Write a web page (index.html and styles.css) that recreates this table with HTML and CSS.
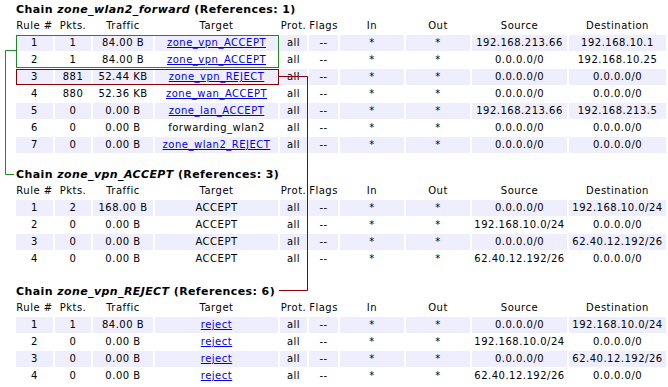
FILE: index.html
```html
<!DOCTYPE html>
<html>
<head>
<meta charset="utf-8">
<link rel="stylesheet" href="styles.css">
</head>
<body>
<div class="page">
  <section class="chain chain-first">
    <h3 class="chain-title">Chain <em>zone_wlan2_forward</em> (References: 1)</h3>
    <table class="rules">
      <colgroup><col class="c-rule"><col class="c-pkts"><col class="c-traffic"><col class="c-target"><col class="c-prot"><col class="c-flags"><col class="c-in"><col class="c-out"><col class="c-src"><col class="c-dst"></colgroup>
      <thead><tr><th>Rule #</th><th>Pkts.</th><th>Traffic</th><th>Target</th><th>Prot.</th><th>Flags</th><th>In</th><th>Out</th><th>Source</th><th>Destination</th></tr></thead>
      <tbody>
        <tr class="alt"><td>1</td><td>1</td><td>84.00 B</td><td><a href="#">zone_vpn_ACCEPT</a></td><td>all</td><td>--</td><td>*</td><td>*</td><td>192.168.213.66</td><td>192.168.10.1</td></tr>
        <tr><td>2</td><td>1</td><td>84.00 B</td><td><a href="#">zone_vpn_ACCEPT</a></td><td>all</td><td>--</td><td>*</td><td>*</td><td>0.0.0.0/0</td><td>192.168.10.25</td></tr>
        <tr class="alt"><td>3</td><td>881</td><td>52.44 KB</td><td><a href="#">zone_vpn_REJECT</a></td><td>all</td><td>--</td><td>*</td><td>*</td><td>0.0.0.0/0</td><td>0.0.0.0/0</td></tr>
        <tr><td>4</td><td>880</td><td>52.36 KB</td><td><a href="#">zone_wan_ACCEPT</a></td><td>all</td><td>--</td><td>*</td><td>*</td><td>0.0.0.0/0</td><td>0.0.0.0/0</td></tr>
        <tr class="alt"><td>5</td><td>0</td><td>0.00 B</td><td><a href="#">zone_lan_ACCEPT</a></td><td>all</td><td>--</td><td>*</td><td>*</td><td>192.168.213.66</td><td>192.168.213.5</td></tr>
        <tr><td>6</td><td>0</td><td>0.00 B</td><td>forwarding_wlan2</td><td>all</td><td>--</td><td>*</td><td>*</td><td>0.0.0.0/0</td><td>0.0.0.0/0</td></tr>
        <tr class="alt"><td>7</td><td>0</td><td>0.00 B</td><td><a href="#">zone_wlan2_REJECT</a></td><td>all</td><td>--</td><td>*</td><td>*</td><td>0.0.0.0/0</td><td>0.0.0.0/0</td></tr>
      </tbody>
    </table>
  </section>

  <section class="chain chain-second">
    <h3 class="chain-title">Chain <em>zone_vpn_ACCEPT</em> (References: 3)</h3>
    <table class="rules">
      <colgroup><col class="c-rule"><col class="c-pkts"><col class="c-traffic"><col class="c-target"><col class="c-prot"><col class="c-flags"><col class="c-in"><col class="c-out"><col class="c-src"><col class="c-dst"></colgroup>
      <thead><tr><th>Rule #</th><th>Pkts.</th><th>Traffic</th><th>Target</th><th>Prot.</th><th>Flags</th><th>In</th><th>Out</th><th>Source</th><th>Destination</th></tr></thead>
      <tbody>
        <tr class="alt"><td>1</td><td>2</td><td>168.00 B</td><td>ACCEPT</td><td>all</td><td>--</td><td>*</td><td>*</td><td>0.0.0.0/0</td><td>192.168.10.0/24</td></tr>
        <tr><td>2</td><td>0</td><td>0.00 B</td><td>ACCEPT</td><td>all</td><td>--</td><td>*</td><td>*</td><td>192.168.10.0/24</td><td>0.0.0.0/0</td></tr>
        <tr class="alt"><td>3</td><td>0</td><td>0.00 B</td><td>ACCEPT</td><td>all</td><td>--</td><td>*</td><td>*</td><td>0.0.0.0/0</td><td>62.40.12.192/26</td></tr>
        <tr><td>4</td><td>0</td><td>0.00 B</td><td>ACCEPT</td><td>all</td><td>--</td><td>*</td><td>*</td><td>62.40.12.192/26</td><td>0.0.0.0/0</td></tr>
      </tbody>
    </table>
  </section>

  <section class="chain chain-third">
    <h3 class="chain-title">Chain <em>zone_vpn_REJECT</em> (References: 6)</h3>
    <table class="rules">
      <colgroup><col class="c-rule"><col class="c-pkts"><col class="c-traffic"><col class="c-target"><col class="c-prot"><col class="c-flags"><col class="c-in"><col class="c-out"><col class="c-src"><col class="c-dst"></colgroup>
      <thead><tr><th>Rule #</th><th>Pkts.</th><th>Traffic</th><th>Target</th><th>Prot.</th><th>Flags</th><th>In</th><th>Out</th><th>Source</th><th>Destination</th></tr></thead>
      <tbody>
        <tr class="alt"><td>1</td><td>1</td><td>84.00 B</td><td><a href="#">reject</a></td><td>all</td><td>--</td><td>*</td><td>*</td><td>0.0.0.0/0</td><td>192.168.10.0/24</td></tr>
        <tr><td>2</td><td>0</td><td>0.00 B</td><td><a href="#">reject</a></td><td>all</td><td>--</td><td>*</td><td>*</td><td>192.168.10.0/24</td><td>0.0.0.0/0</td></tr>
        <tr class="alt"><td>3</td><td>0</td><td>0.00 B</td><td><a href="#">reject</a></td><td>all</td><td>--</td><td>*</td><td>*</td><td>0.0.0.0/0</td><td>62.40.12.192/26</td></tr>
        <tr><td>4</td><td>0</td><td>0.00 B</td><td><a href="#">reject</a></td><td>all</td><td>--</td><td>*</td><td>*</td><td>62.40.12.192/26</td><td>0.0.0.0/0</td></tr>
      </tbody>
    </table>
  </section>

  <svg class="annotations" width="668" height="387" viewBox="0 0 668 387" aria-hidden="true">
    <g class="mark-green" fill="none">
      <rect x="16.5" y="35.5" width="262" height="32"/>
      <polyline points="16,50.5 5.5,50.5 5.5,174.5 14,174.5"/>
    </g>
    <g class="mark-red" fill="none">
      <rect x="16.5" y="69.5" width="262" height="15"/>
      <polyline points="279,76.5 307.5,76.5 307.5,290.5 279,290.5"/>
    </g>
  </svg>
</div>
</body>
</html>
```

FILE: styles.css
```css
html, body {
  margin: 0;
  padding: 0;
  background: #ffffff;
}

body {
  font-family: "DejaVu Sans", Verdana, sans-serif;
  color: #000000;
}

.page {
  position: relative;
  width: 668px;
  height: 387px;
  overflow: hidden;
}

.chain-first { padding-top: 2px; }
.chain-second { margin-top: 13px; }
.chain-third { margin-top: 16px; }

.chain-title {
  margin: 0 0 0 16px;
  font-size: 11px;
  line-height: 15px;
  font-weight: bold;
  letter-spacing: 0.4px;
}

.chain-title em {
  font-style: italic;
}

.rules {
  margin-left: 14px;
  border-collapse: separate;
  border-spacing: 2px 1px;
  table-layout: fixed;
  width: 654px;
  font-size: 10px;
  letter-spacing: 0.5px;
}

.rules th,
.rules td {
  padding: 0;
  height: 16px;
  line-height: 16px;
  text-align: center;
  white-space: nowrap;
  overflow: hidden;
  font-weight: normal;
}

.rules tr.alt td {
  background: #eeeeff;
}

.rules a {
  color: #0000ee;
  text-decoration: underline;
}

.c-rule { width: 37px; }
.c-pkts { width: 36px; }
.c-traffic { width: 60px; }
.c-target { width: 123px; }
.c-prot { width: 27px; }
.c-flags { width: 29px; }
.c-in { width: 64px; }
.c-out { width: 64px; }
.c-src { width: 95px; }
.c-dst { width: 97px; }

.annotations {
  position: absolute;
  left: 0;
  top: 0;
  pointer-events: none;
}

.mark-green {
  stroke: #1f8a1f;
  stroke-width: 1;
}

.mark-red {
  stroke: #8b0000;
  stroke-width: 1;
}
```
